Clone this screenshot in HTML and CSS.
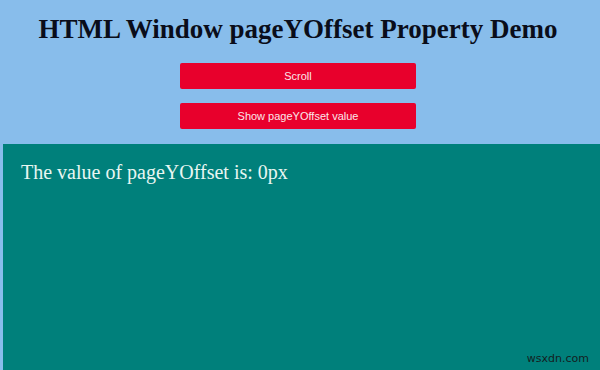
FILE: index.html
```html
<!DOCTYPE html>
<html lang="en">
  <head>
    <meta charset="UTF-8" />
    <meta name="viewport" content="width=device-width, initial-scale=1.0" />
    <title>HTML Window pageYOffset Property Demo</title>
    <link rel="stylesheet" href="styles.css">
  </head>
  <body>
    <div class="top">
      <h1 class="title">HTML Window pageYOffset Property Demo</h1>
      <button class="btn" onclick="scrollPage()">Scroll</button>
      <button class="btn" onclick="showOffset()">Show pageYOffset value</button>
    </div>
    <div class="box">
      <p class="msg" id="msg">The value of pageYOffset is: 0px</p>
      <span class="mark">wsxdn.com</span>
    </div>

    <script>
      function scrollPage() {
        window.scrollBy(0, 100);
      }

      function showOffset() {
        document.getElementById("msg").textContent =
          "The value of pageYOffset is: " + window.pageYOffset + "px";
      }
    </script>
  </body>
</html>
```

FILE: styles.css
```css
html,
body {
  height: 100%;
}
body {
  margin: 0;
  padding: 0;
  background-color: #88bdeb;
  font-family: "Liberation Serif", "Times New Roman", serif;
  display: flex;
  flex-direction: column;
}
.top {
  display: flex;
  flex-direction: column;
  align-items: center;
  padding: 14px 4px 15px 0;
}
.title {
  margin: 0 0 18px 0;
  font-size: 27px;
  font-weight: bold;
  color: #0a0d1a;
  text-align: center;
}
.btn {
  width: 236px;
  height: 26px;
  margin-bottom: 14px;
  background-color: #e8002c;
  color: #fbe6ea;
  border: none;
  border-radius: 2px;
  font-family: "Liberation Sans", Arial, sans-serif;
  font-size: 11px;
  cursor: pointer;
}
.btn:last-child {
  margin-bottom: 0;
}
.box {
  flex: 1;
  position: relative;
  margin-left: 3px;
  padding: 17px 18px;
  background-color: #00807b;
}
.msg {
  margin: 0;
  font-size: 20px;
  color: #e8f6f2;
}
.mark {
  position: absolute;
  right: 11px;
  bottom: 5px;
  font-family: "DejaVu Sans", sans-serif;
  font-size: 11px;
  color: #14201f;
}
```
